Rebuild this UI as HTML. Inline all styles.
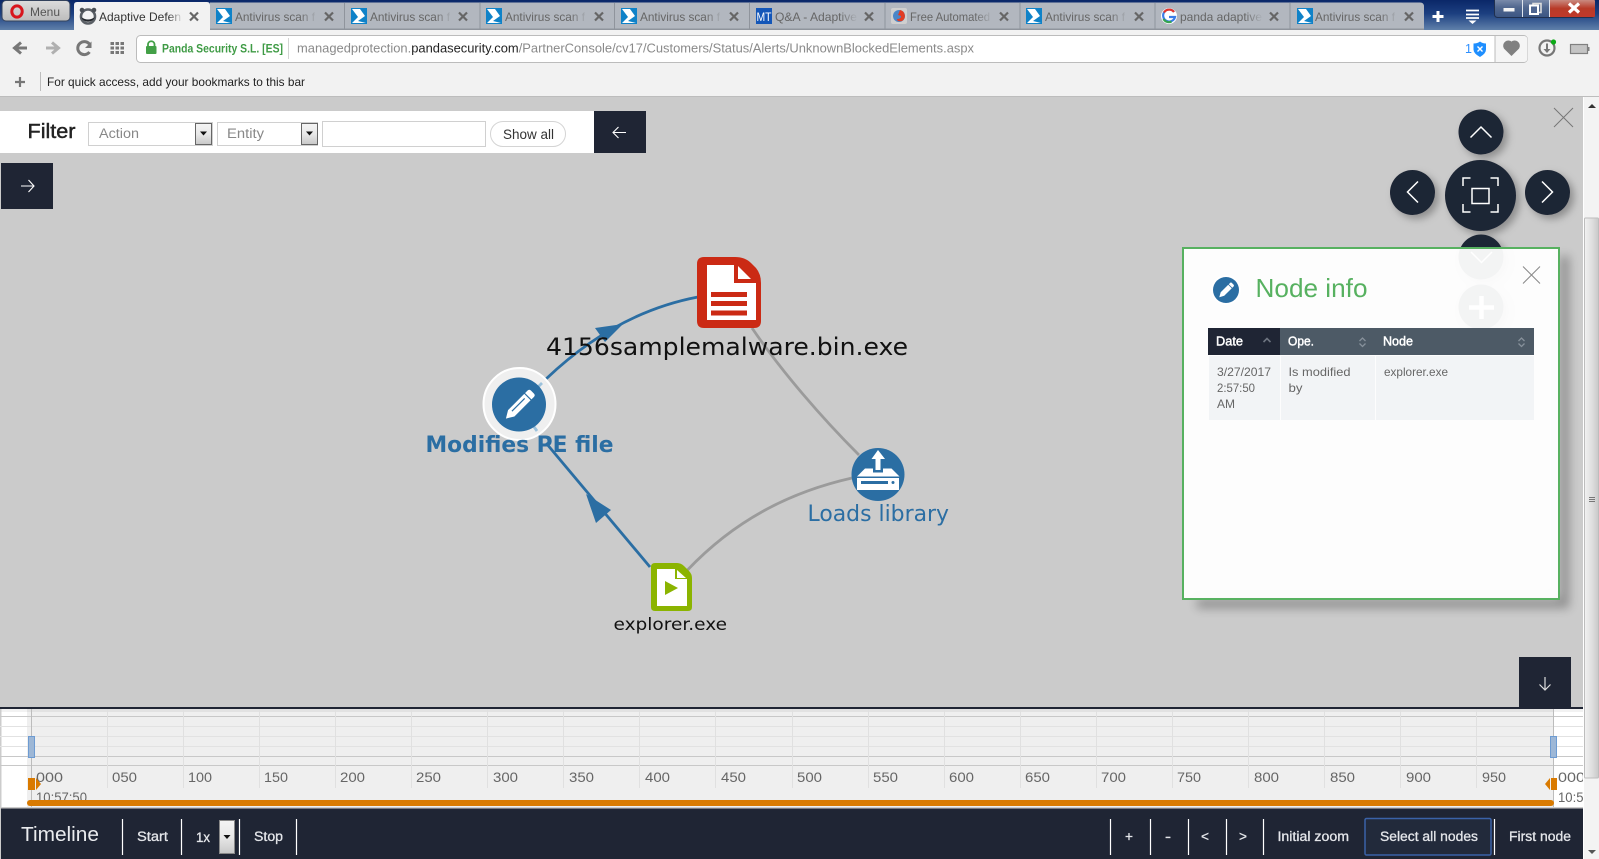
<!DOCTYPE html>
<html><head><meta charset="utf-8"><title>Adaptive Defense</title>
<style>
html,body{margin:0;padding:0;width:1599px;height:859px;overflow:hidden;background:#cbcbcb}
svg{display:block}
text{font-family:"Liberation Sans",sans-serif}
.g text,text.g{font-family:"DejaVu Sans",sans-serif}
.tab{font-size:12px;fill:#666}
.x{stroke:#666;stroke-width:2.2;fill:none}
.tl{font-size:14px;fill:#666}
.b{font-size:13.5px;fill:#e4e6ea;stroke:#e4e6ea;stroke-width:.3}
.sep{stroke:#fff;stroke-width:1.2}
.td{font-size:12px;fill:#666}
.th{font-size:12.5px;fill:#fff;stroke:#fff;stroke-width:.45}
</style></head><body>
<svg width="1599" height="859" viewBox="0 0 1599 859" xmlns="http://www.w3.org/2000/svg">
<defs>
<linearGradient id="top" x1="0" y1="0" x2="0" y2="1"><stop offset="0" stop-color="#0a2768"/><stop offset=".45" stop-color="#1c3f80"/><stop offset="1" stop-color="#5f80aa"/></linearGradient>
<linearGradient id="menu" x1="0" y1="0" x2="0" y2="1"><stop offset="0" stop-color="#dcdcdc"/><stop offset="1" stop-color="#bcbcbc"/></linearGradient>
<linearGradient id="sel" x1="0" y1="0" x2="0" y2="1"><stop offset="0" stop-color="#f5f5f5"/><stop offset=".5" stop-color="#e8e8e8"/><stop offset="1" stop-color="#c8c8c8"/></linearGradient>
<linearGradient id="win" x1="0" y1="0" x2="0" y2="1"><stop offset="0" stop-color="#8a99b5"/><stop offset=".5" stop-color="#52688f"/><stop offset="1" stop-color="#3b5583"/></linearGradient>
<linearGradient id="red" x1="0" y1="0" x2="0" y2="1"><stop offset="0" stop-color="#c98a80"/><stop offset=".5" stop-color="#b83a28"/><stop offset="1" stop-color="#c0392b"/></linearGradient>
<linearGradient id="thumb" x1="0" y1="0" x2="1" y2="0"><stop offset="0" stop-color="#f2f2f2"/><stop offset=".6" stop-color="#dcdcdc"/><stop offset="1" stop-color="#c8c8c8"/></linearGradient>
<linearGradient id="fade" x1="0" y1="0" x2="1" y2="0"><stop offset="0" stop-color="#b2b7bf" stop-opacity="0"/><stop offset="1" stop-color="#b2b7bf"/></linearGradient>
<linearGradient id="fadeA" x1="0" y1="0" x2="1" y2="0"><stop offset="0" stop-color="#f2f2f2" stop-opacity="0"/><stop offset="1" stop-color="#f2f2f2"/></linearGradient>
<filter id="sh" x="-40%" y="-40%" width="190%" height="190%"><feDropShadow dx="4" dy="4" stdDeviation="4" flood-color="#000" flood-opacity=".3"/></filter>
<clipPath id="tlclip"><rect x="0" y="709" width="1583" height="99"/></clipPath>
</defs>

<!-- page background -->
<rect width="1599" height="859" fill="#cbcbcb"/>

<!-- title bar -->
<rect width="1599" height="30" fill="url(#top)"/>
<rect x="2" y="0.500" width="68" height="20.500" rx="4" fill="url(#menu)" stroke="#33425c"/>
<ellipse cx="17" cy="11.500" rx="5.200" ry="5.600" fill="none" stroke="#d8151c" stroke-width="3"/>
<text x="30" y="16" font-size="12" fill="#555" textLength="30" lengthAdjust="spacingAndGlyphs">Menu</text>

<!-- tabs -->
<path d="M74 30V5q0-3 3-3H207q3 0 3 3V30Z" fill="#f2f2f2"/>
<path d="M210 30V2.500H1420q4 0 4 4V30Z" fill="#b2b7bf"/>
<path d="M344.500 3V29M480 3V29M614.500 3V29M749.500 3V29M885 3V29M1020 3V29M1155 3V29M1290 3V29" stroke="#8f949c" stroke-width="1"/>
<rect x="210" y="28.500" width="1214" height="1.500" fill="#8f949c"/>

<!-- active tab -->
<circle cx="88" cy="16.500" r="7" fill="#f4f4f4" stroke="#5a5f65" stroke-width="2.600"/>
<circle cx="82" cy="10" r="2.300" fill="#4a4f55"/><circle cx="94" cy="10" r="2.300" fill="#4a4f55"/>
<path d="M81 17a7.500 7.500 0 0 0 14 0q-7 5-14 0z" fill="#23272c"/>
<text x="99" y="21" font-size="12" fill="#333" textLength="82" lengthAdjust="spacingAndGlyphs">Adaptive Defen</text>
<rect x="168" y="6" width="15" height="18" fill="url(#fadeA)"/>
<path class="x" d="M190 12.500l8 8M198 12.500l-8 8"/>

<!-- antivirus tabs -->
<g id="avicon"><rect x="216" y="8" width="16" height="16" fill="#0f82c8"/><path d="M217 9h8l5 7-7 5 8 2h-14l6-6z" fill="#fff"/></g>
<text class="tab" x="235" y="21" textLength="80" lengthAdjust="spacingAndGlyphs">Antivirus scan f</text><rect x="300" y="6" width="18" height="18" fill="url(#fade)"/><path class="x" d="M325 12.500l8 8M333 12.500l-8 8"/>

<rect x="351" y="8" width="16" height="16" fill="#0f82c8"/><path d="M352 9h8l5 7-7 5 8 2h-14l6-6z" fill="#fff"/>
<text class="tab" x="370" y="21" textLength="80" lengthAdjust="spacingAndGlyphs">Antivirus scan f</text><rect x="435" y="6" width="18" height="18" fill="url(#fade)"/><path class="x" d="M459 12.500l8 8M467 12.500l-8 8"/>

<rect x="486" y="8" width="16" height="16" fill="#0f82c8"/><path d="M487 9h8l5 7-7 5 8 2h-14l6-6z" fill="#fff"/>
<text class="tab" x="505" y="21" textLength="80" lengthAdjust="spacingAndGlyphs">Antivirus scan f</text><rect x="570" y="6" width="18" height="18" fill="url(#fade)"/><path class="x" d="M595 12.500l8 8M603 12.500l-8 8"/>

<rect x="621" y="8" width="16" height="16" fill="#0f82c8"/><path d="M622 9h8l5 7-7 5 8 2h-14l6-6z" fill="#fff"/>
<text class="tab" x="640" y="21" textLength="80" lengthAdjust="spacingAndGlyphs">Antivirus scan f</text><rect x="705" y="6" width="18" height="18" fill="url(#fade)"/><path class="x" d="M730 12.500l8 8M738 12.500l-8 8"/>

<rect x="756" y="8" width="16" height="16" fill="#1356b8"/><text x="756.500" y="21" font-size="12" fill="#fff" textLength="15" lengthAdjust="spacingAndGlyphs">MT</text>
<text class="tab" x="775" y="21" textLength="82" lengthAdjust="spacingAndGlyphs">Q&amp;A - Adaptive</text><rect x="840" y="6" width="18" height="18" fill="url(#fade)"/><path class="x" d="M865 12.500l8 8M873 12.500l-8 8"/>

<rect x="891" y="8" width="16" height="16" rx="2" fill="#cfcfcf"/><circle cx="899" cy="16" r="6" fill="#4a86c8"/><path d="M900 10a6 6 0 0 1 2 11q-5 1-5-2 4 0 4-3l-3-1z" fill="#e23b22"/>
<text class="tab" x="910" y="21" textLength="80" lengthAdjust="spacingAndGlyphs">Free Automated</text><rect x="975" y="6" width="18" height="18" fill="url(#fade)"/><path class="x" d="M1000 12.500l8 8M1008 12.500l-8 8"/>

<rect x="1026" y="8" width="16" height="16" fill="#0f82c8"/><path d="M1027 9h8l5 7-7 5 8 2h-14l6-6z" fill="#fff"/>
<text class="tab" x="1045" y="21" textLength="80" lengthAdjust="spacingAndGlyphs">Antivirus scan f</text><rect x="1110" y="6" width="18" height="18" fill="url(#fade)"/><path class="x" d="M1135 12.500l8 8M1143 12.500l-8 8"/>

<circle cx="1169" cy="16" r="8" fill="#fff"/><path d="M1174 12a6 6 0 1 0 1 5h-6" fill="none" stroke="#3a7de8" stroke-width="2.200"/><path d="M1164 12.500a6 6 0 0 1 10-.5" fill="none" stroke="#e5352a" stroke-width="2.200"/><path d="M1163.500 19a6 6 0 0 0 8 2.500" fill="none" stroke="#35a24f" stroke-width="2.200"/>
<text class="tab" x="1180" y="21" textLength="82" lengthAdjust="spacingAndGlyphs">panda adaptive</text><rect x="1245" y="6" width="18" height="18" fill="url(#fade)"/><path class="x" d="M1270 12.500l8 8M1278 12.500l-8 8"/>

<rect x="1297" y="8" width="16" height="16" fill="#0f82c8"/><path d="M1298 9h8l5 7-7 5 8 2h-14l6-6z" fill="#fff"/>
<text class="tab" x="1315" y="21" textLength="80" lengthAdjust="spacingAndGlyphs">Antivirus scan f</text><rect x="1380" y="6" width="18" height="18" fill="url(#fade)"/><path class="x" d="M1405 12.500l8 8M1413 12.500l-8 8"/>

<!-- new tab, list -->
<path d="M1438 11v11M1432.500 16.500h11" stroke="#fff" stroke-width="3"/>
<path d="M1466 10.500h13M1466 14.500h13M1466 18h13" stroke="#fff" stroke-width="1.800"/><path d="M1468.500 20.500h8l-4 3.500z" fill="#fff"/>

<!-- window controls -->
<rect x="1494.500" y="-3" width="100" height="20.500" rx="3" fill="url(#win)" stroke="#20304f"/>
<path d="M1550 0h44q1 0 1 1V16q0 1-1 1h-44z" fill="url(#red)"/>
<path d="M1522.500 0V17M1549.500 0V17" stroke="#dfe5ee" stroke-width="1"/>
<rect x="1503.500" y="8" width="11" height="3.500" fill="#f4f4f4"/>
<rect x="1533" y="3.500" width="8" height="9" fill="none" stroke="#ddd" stroke-width="1.600"/>
<rect x="1530" y="5.500" width="8" height="8.500" fill="#4e6590" stroke="#fff" stroke-width="2"/>
<path d="M1569 3.500l10 9M1579 3.500l-10 9" stroke="#fff" stroke-width="3.200"/>

<!-- toolbar -->
<rect y="30" width="1599" height="66" fill="#f2f2f2"/>
<rect y="96" width="1599" height="1" fill="#bdbdbd"/>
<path d="M15 48h12" stroke="#777" stroke-width="3"/><path d="M21 42.500l-6.500 5.500 6.500 5.500" fill="none" stroke="#777" stroke-width="3"/>
<path d="M46 48h12" stroke="#b0b0b0" stroke-width="3"/><path d="M52 42.500l6.500 5.500-6.500 5.500" fill="none" stroke="#b0b0b0" stroke-width="3"/>
<path d="M89.500 52a6.500 6.500 0 1 1 .5-7" fill="none" stroke="#777" stroke-width="3"/><path d="M91.500 41.500v6.500h-6.500z" fill="#777"/>
<path d="M110.500 43.500h14M110.500 48h14M110.500 52.500h14" stroke="#777" stroke-width="3" stroke-dasharray="3.500 1.500"/>

<!-- address bar -->
<rect x="136.500" y="35.500" width="1391" height="27" rx="4" fill="#fff" stroke="#bcbcbc"/>
<path d="M1495 35.500V62.500" stroke="#bcbcbc"/>
<path d="M1495.500 36h28q4 0 4 4v18q0 4-4 4h-28z" fill="#f5f5f5"/>
<rect x="146" y="46" width="10.500" height="8" rx="1" fill="#43a047"/>
<path d="M148 46.500v-2.500a3.300 3.300 0 0 1 6.500 0v2.500" fill="none" stroke="#43a047" stroke-width="1.800"/>
<text x="162" y="52.500" font-size="11.500" font-weight="bold" fill="#3f9b45" textLength="121" lengthAdjust="spacingAndGlyphs">Panda Security S.L. [ES]</text>
<path d="M288.500 38V59" stroke="#d4d4d4"/>
<text x="297" y="52.500" font-size="12.500" fill="#8a8a8a" textLength="677" lengthAdjust="spacingAndGlyphs">managedprotection.<tspan fill="#222">pandasecurity.com</tspan>/PartnerConsole/cv17/Customers/Status/Alerts/UnknownBlockedElements.aspx</text>
<text x="1465" y="53" font-size="12.500" fill="#2e90ff">1</text>
<path d="M1473.500 43.500q4 0 6.500-2 2.500 2 6 2v6q0 4-6 7.500-6.500-3.500-6.500-7.500z" fill="#1f8fff"/>
<path d="M1477.500 46.500l5 5M1482.500 46.500l-5 5" stroke="#fff" stroke-width="1.400"/>
<path d="M1511.500 55l-7-7a4.500 4.500 0 0 1 7-5.500 4.500 4.500 0 0 1 7 5.500z" fill="#808080" stroke="#808080" stroke-width="1.500"/>
<circle cx="1547" cy="48" r="7.500" fill="none" stroke="#777" stroke-width="2.200"/>
<path d="M1547 43.500v7" stroke="#777" stroke-width="2"/><path d="M1543.500 49l3.500 4 3.500-4z" fill="#777"/>
<circle cx="1553.500" cy="42" r="2.600" fill="#0dab17"/>
<rect x="1570.500" y="44.500" width="17" height="9" fill="#c4c4c4" stroke="#808080" stroke-width="1.200"/><rect x="1588" y="47" width="1.500" height="4" fill="#808080"/>

<!-- bookmarks bar -->
<path d="M20 77v10M15 82h10" stroke="#777" stroke-width="2.200"/>
<path d="M40.500 72V91" stroke="#bdbdbd"/>
<text x="47" y="86" font-size="12" fill="#222" textLength="258" lengthAdjust="spacingAndGlyphs">For quick access, add your bookmarks to this bar</text>

<!-- scrollbar -->
<rect x="1583" y="97" width="16" height="762" fill="#f3f3f3"/>
<rect x="1583" y="97" width="1" height="762" fill="#fff"/>
<rect x="1584.500" y="218" width="14" height="560" rx="1" fill="url(#thumb)" stroke="#bdbdbd"/>
<path d="M1588 108h8l-4-4z" fill="#333"/><path d="M1588 850h8l-4 4z" fill="#555"/>
<path d="M1589 497.500h6M1589 499.500h6M1589 501.500h6" stroke="#777"/>

<!-- filter bar -->
<rect x="0" y="111" width="594" height="42" fill="#fff"/>
<rect x="594" y="111" width="52" height="42" fill="#1f2534"/>
<path d="M613 132.500h13M618.500 127l-5.500 5.500 5.500 5.500" fill="none" stroke="#fff" stroke-width="1.100"/>
<text x="27.500" y="138" font-size="20" fill="#222" stroke="#222" stroke-width=".45" textLength="48" lengthAdjust="spacingAndGlyphs">Filter</text>
<rect x="88.500" y="122.500" width="124" height="23" fill="#fff" stroke="#d0d0d0"/>
<text x="99" y="138" font-size="13.500" fill="#888" textLength="40" lengthAdjust="spacingAndGlyphs">Action</text>
<rect x="195.500" y="123.500" width="16" height="21" fill="url(#sel)" stroke="#666"/><path d="M200 131.500h7l-3.500 4z" fill="#111"/>
<rect x="217.500" y="122.500" width="100" height="23" fill="#fff" stroke="#d0d0d0"/>
<text x="227" y="138" font-size="13.500" fill="#888" textLength="37" lengthAdjust="spacingAndGlyphs">Entity</text>
<rect x="301.500" y="123.500" width="16" height="21" fill="url(#sel)" stroke="#666"/><path d="M306 131.500h7l-3.500 4z" fill="#111"/>
<rect x="322.500" y="121.500" width="163" height="25" fill="#fff" stroke="#d0d0d0"/>
<rect x="490.500" y="121.500" width="75" height="25" rx="12.500" fill="#fff" stroke="#d4d4d4"/>
<text x="503" y="139" font-size="13.500" fill="#333" textLength="51" lengthAdjust="spacingAndGlyphs">Show all</text>
<rect x="1" y="163" width="52" height="46" fill="#1f2534"/>
<path d="M21 186h13M28.500 180l5.500 6-5.500 6" fill="none" stroke="#fff" stroke-width="1.100"/>

<!-- big close -->
<path d="M1554 108l19 19M1573 108l-19 19" stroke="#777" stroke-width="1" fill="none"/>

<!-- nav circles -->
<g filter="url(#sh)" fill="#1f2534">
<circle cx="1481" cy="132" r="22.500"/>
<circle cx="1412.500" cy="192.500" r="22.500"/>
<circle cx="1547.500" cy="192.500" r="22.500"/>
<circle cx="1480.500" cy="195.500" r="35.500"/>
<circle cx="1481" cy="257" r="22.500"/>
<circle cx="1481" cy="307" r="22.500"/>
</g>
<path d="M1470.500 137.500l10.500-10.500 10.500 10.500" fill="none" stroke="#fff" stroke-width="1.500"/>
<path d="M1418 181.500l-10.500 10.500 10.500 10.500" fill="none" stroke="#fff" stroke-width="1.500"/>
<path d="M1542 181.500l10.500 10.500-10.500 10.500" fill="none" stroke="#fff" stroke-width="1.500"/>
<path d="M1463 186v-8h7.500M1490.500 178h7.500v8M1463 204v8h7.500M1490.500 212h7.500v-8" fill="none" stroke="#fff" stroke-width="1.500"/>
<rect x="1472" y="188.500" width="17" height="15" fill="none" stroke="#fff" stroke-width="1.500"/>

<!-- graph edges -->
<path d="M650 567L546 443" stroke="#2b6ea3" stroke-width="2.800" fill="none"/>
<path d="M546 379C590 337 640 308 698 297" stroke="#2b6ea3" stroke-width="2.800" fill="none"/>
<path d="M752 328C782 372 822 418 859 455" stroke="#9b9b9b" stroke-width="2.800" fill="none"/>
<path d="M852 478C790 492 735 520 687.500 570" stroke="#9b9b9b" stroke-width="2.800" fill="none"/>
<path d="M586 494L611 510 596 523Z" fill="#2b6ea3"/>
<path d="M623 324L595 328 605 342Z" fill="#2b6ea3"/>

<!-- pencil node -->
<circle cx="519.500" cy="404" r="36" fill="#efefef" stroke="#fff" stroke-width="2"/>
<path d="M537 388l5-5M532 424l5 7" stroke="#9cc2dc" stroke-width="2.800"/>
<circle cx="519" cy="404.500" r="27" fill="#2b6ea3"/>
<g transform="translate(519 405.500) rotate(45)">
<path d="M-4.500 -16.500q0-2.500 2.500-2.500h4q2.500 0 2.500 2.500V11L0 18.500-4.500 11Z" fill="#fff"/>
<path d="M-5 -12.500H5" stroke="#2b6ea3" stroke-width="1.200"/>
<path d="M-1 -9V9" stroke="#2b6ea3" stroke-width="1.200"/>
</g>
<text class="g" x="425.500" y="452" font-size="22" font-weight="bold" fill="#2b6ea3" textLength="188" lengthAdjust="spacingAndGlyphs">Modifies PE file</text>

<!-- red doc -->
<path d="M704 257H735Q745 257 751 263L756 268Q761 274 761 283V321Q761 328 754 328H704Q697 328 697 321V264Q697 257 704 257Z" fill="#cb2a14"/>
<path d="M707 265H734V283H756V320H707Z" fill="#fff"/>
<path d="M738 266L751 279H738Z" fill="#fff"/>
<path d="M711 292h36v5h-36zM711 301h36v5h-36zM711 310.500h36v5h-36z" fill="#cb2a14"/>
<text class="g" x="546" y="355" font-size="24" fill="#111" textLength="362" lengthAdjust="spacingAndGlyphs">4156samplemalware.bin.exe</text>

<!-- loads library -->
<circle cx="878" cy="474.500" r="26.500" fill="#2b6ea3"/>
<path d="M878 450L885 459H880.500V470H875.500V459H871.500Z" fill="#fff"/>
<path d="M857 476.500L865 468.500H873V472.500H883V468.500H891.500L899.500 476.500Z" fill="#fff"/>
<rect x="857" y="478" width="42" height="12" fill="#fff"/>
<rect x="861" y="481" width="27" height="3" fill="#2b6ea3"/><circle cx="893" cy="482.500" r="1.500" fill="#2b6ea3"/>
<text class="g" x="807.500" y="521" font-size="22" fill="#2b6ea3" textLength="141.500" lengthAdjust="spacingAndGlyphs">Loads library</text>

<!-- explorer -->
<path d="M655 563H677Q681 563 684 566L689 571Q692 574 692 578V607Q692 611 688 611H655Q651 611 651 607V567Q651 563 655 563Z" fill="#8bb400"/>
<path d="M657 569H675V579H687V606H657Z" fill="#fff"/>
<path d="M677 570L686 578H677Z" fill="#fff"/>
<path d="M665 581L678 588 665 595Z" fill="#8bb400"/>
<text class="g" x="613.500" y="630" font-size="17" fill="#111" textLength="113.500" lengthAdjust="spacingAndGlyphs">explorer.exe</text>

<!-- down button -->
<rect x="1519" y="657" width="52" height="50" fill="#1f2534"/>
<path d="M1545 677v13M1539.500 684.500l5.500 5.500 5.500-5.500" fill="none" stroke="#ddd" stroke-width="1.200"/>

<!-- timeline -->
<rect x="0" y="709" width="1583" height="99" fill="#fff"/>
<rect x="27" y="709" width="1526" height="99" fill="#efefef"/>
<rect x="0" y="709" width="1583" height="3" fill="#000" opacity=".05"/>
<rect x="0" y="707" width="1583" height="2" fill="#1f2534"/>
<rect x="0" y="709" width="1.500" height="99" fill="#ccc"/>
<path d="M0 726.500H1583M0 736.500H1583M0 746.500H1583" stroke="#e2e2e2"/>
<path d="M0 716.500H1583M0 756.500H1583M0 765.500H1583" stroke="#c8c8c8"/>
<path d="M107.500 709V788M183.500 709V788M259.500 709V788M335.500 709V788M411.500 709V788M487.500 709V788M563.500 709V788M639.500 709V788M715.500 709V788M792.500 709V788M868.500 709V788M944.500 709V788M1020.500 709V788M1096.500 709V788M1172.500 709V788M1248.500 709V788M1324.500 709V788M1400.500 709V788M1476.500 709V788" stroke="#e0e0e0"/>
<path d="M31.500 709V808M1553.500 709V808" stroke="#bcbcbc"/>
<rect x="28.500" y="736.500" width="6" height="21" fill="#9db7d6" stroke="#6d9bd2"/>
<rect x="1550.500" y="736.500" width="6" height="21" fill="#9db7d6" stroke="#6d9bd2"/>
<g clip-path="url(#tlclip)">
<text class="tl" x="36" y="782" textLength="27" lengthAdjust="spacingAndGlyphs">000</text>
<text class="tl" x="112" y="782" textLength="25" lengthAdjust="spacingAndGlyphs">050</text>
<text class="tl" x="188" y="782" textLength="24" lengthAdjust="spacingAndGlyphs">100</text>
<text class="tl" x="264" y="782" textLength="24" lengthAdjust="spacingAndGlyphs">150</text>
<text class="tl" x="340" y="782" textLength="25" lengthAdjust="spacingAndGlyphs">200</text>
<text class="tl" x="416" y="782" textLength="25" lengthAdjust="spacingAndGlyphs">250</text>
<text class="tl" x="493" y="782" textLength="25" lengthAdjust="spacingAndGlyphs">300</text>
<text class="tl" x="569" y="782" textLength="25" lengthAdjust="spacingAndGlyphs">350</text>
<text class="tl" x="645" y="782" textLength="25" lengthAdjust="spacingAndGlyphs">400</text>
<text class="tl" x="721" y="782" textLength="25" lengthAdjust="spacingAndGlyphs">450</text>
<text class="tl" x="797" y="782" textLength="25" lengthAdjust="spacingAndGlyphs">500</text>
<text class="tl" x="873" y="782" textLength="25" lengthAdjust="spacingAndGlyphs">550</text>
<text class="tl" x="949" y="782" textLength="25" lengthAdjust="spacingAndGlyphs">600</text>
<text class="tl" x="1025" y="782" textLength="25" lengthAdjust="spacingAndGlyphs">650</text>
<text class="tl" x="1101" y="782" textLength="25" lengthAdjust="spacingAndGlyphs">700</text>
<text class="tl" x="1177" y="782" textLength="24" lengthAdjust="spacingAndGlyphs">750</text>
<text class="tl" x="1254" y="782" textLength="25" lengthAdjust="spacingAndGlyphs">800</text>
<text class="tl" x="1330" y="782" textLength="25" lengthAdjust="spacingAndGlyphs">850</text>
<text class="tl" x="1406" y="782" textLength="25" lengthAdjust="spacingAndGlyphs">900</text>
<text class="tl" x="1482" y="782" textLength="24" lengthAdjust="spacingAndGlyphs">950</text>
<text class="tl" x="1558" y="782" textLength="27" lengthAdjust="spacingAndGlyphs">000</text>
<text class="tl" x="36" y="802" textLength="51" lengthAdjust="spacingAndGlyphs">10:57:50</text>
<text class="tl" x="1558" y="802" textLength="51" lengthAdjust="spacingAndGlyphs">10:57:50</text>
</g>
<rect x="1583" y="709" width="1" height="99" fill="#fff"/>
<rect x="27" y="800" width="1527" height="6" rx="3" fill="#d97a00"/>
<rect x="28" y="778" width="7" height="12" fill="#d97a00"/><path d="M36 778l5 6-5 6z" fill="#d97a00"/>
<rect x="1551" y="778" width="6" height="12" fill="#d97a00"/><path d="M1550 778l-5 6 5 6z" fill="#d97a00"/>
<rect x="0" y="807" width="1583" height="1.500" fill="#ccc"/>

<!-- bottom bar -->
<rect x="1" y="808.500" width="1582" height="50.500" fill="#1f2534"/>
<text x="21" y="841" font-size="20" fill="#e9ebee" textLength="78" lengthAdjust="spacingAndGlyphs">Timeline</text>
<path class="sep" d="M122.500 819V855M181.500 819V855M239.500 819V855M296.500 819V855M1110.500 819V855M1150.500 819V855M1188.500 819V855M1226.500 819V855M1263.500 819V855M1494.500 819V855"/>
<text class="b" x="137" y="841" textLength="31" lengthAdjust="spacingAndGlyphs">Start</text>
<text class="b" x="196" y="842" textLength="14" lengthAdjust="spacingAndGlyphs">1x</text>
<rect x="219.500" y="820.500" width="15" height="33" fill="url(#sel)" stroke="#888"/><path d="M223.500 835h7l-3.500 4z" fill="#111"/>
<text class="b" x="254" y="841" textLength="29" lengthAdjust="spacingAndGlyphs">Stop</text>
<text class="b" x="1125" y="841" textLength="8" lengthAdjust="spacingAndGlyphs">+</text>
<text class="b" x="1165" y="841" textLength="6" lengthAdjust="spacingAndGlyphs">-</text>
<text class="b" x="1201" y="841" textLength="8" lengthAdjust="spacingAndGlyphs">&lt;</text>
<text class="b" x="1239" y="841" textLength="8" lengthAdjust="spacingAndGlyphs">&gt;</text>
<text class="b" x="1277.500" y="841" textLength="71.500" lengthAdjust="spacingAndGlyphs">Initial zoom</text>
<rect x="1365" y="818.500" width="126" height="36.500" rx="1.500" fill="#222a3b" stroke="#3a62a8" stroke-width="1.500"/>
<text class="b" x="1380" y="841" textLength="98" lengthAdjust="spacingAndGlyphs">Select all nodes</text>
<text class="b" x="1509" y="841" textLength="62" lengthAdjust="spacingAndGlyphs">First node</text>

<!-- node info panel -->
<path d="M1560 256h9v352h-372v-9h363z" fill="#000" opacity=".3" style="filter:blur(5px)"/>
<rect x="1183" y="248" width="376" height="351" fill="#fff" fill-opacity=".95" stroke="#57b160" stroke-width="2"/>
<path d="M1469 307.500h25M1481.500 296v23" stroke="#fff" stroke-width="4.500"/>
<path d="M1471 252l10.500 10.500 10.500-10.500" fill="none" stroke="#fff" stroke-width="1.500"/>
<circle cx="1226" cy="290" r="15" fill="#fff"/>
<circle cx="1226" cy="290" r="13" fill="#2b6ea3"/>
<g transform="translate(1226 290.500) rotate(45)"><path d="M-2.500 -8q0-1.500 1.500-1.500h2q1.500 0 1.500 1.500V5L0 9.500-2.500 5Z" fill="#fff"/><path d="M-3 -6H3" stroke="#2b6ea3" stroke-width=".8"/></g>
<text x="1255.500" y="297" font-size="26" fill="#57b160" textLength="112" lengthAdjust="spacingAndGlyphs">Node info</text>
<path d="M1523 266.500l17 17M1540 266.500l-17 17" stroke="#888" stroke-width="1" fill="none"/>

<rect x="1208" y="328" width="72" height="27" fill="#1f2534"/>
<rect x="1280" y="328" width="254" height="27" fill="#4d5a66"/>
<text class="th" x="1216" y="345.500" textLength="27" lengthAdjust="spacingAndGlyphs">Date</text>
<text class="th" x="1288" y="345.500" textLength="26" lengthAdjust="spacingAndGlyphs">Ope.</text>
<text class="th" x="1383" y="345.500" textLength="30" lengthAdjust="spacingAndGlyphs">Node</text>
<path d="M1263.500 342l3.500-3.500 3.500 3.500" fill="none" stroke="#6d7480" stroke-width="1.600"/>
<path d="M1359.500 341l3-3 3 3M1359.500 343.500l3 3 3-3" fill="none" stroke="#87919b" stroke-width="1.300"/>
<path d="M1518.500 341l3-3 3 3M1518.500 343.500l3 3 3-3" fill="none" stroke="#87919b" stroke-width="1.300"/>
<rect x="1209" y="356" width="71" height="64" fill="#f2f4f6"/>
<rect x="1281" y="356" width="94" height="64" fill="#f2f4f6"/>
<rect x="1376" y="356" width="158" height="64" fill="#f2f4f6"/>
<text class="td" x="1217" y="376" textLength="54" lengthAdjust="spacingAndGlyphs">3/27/2017</text>
<text class="td" x="1217" y="392" textLength="38" lengthAdjust="spacingAndGlyphs">2:57:50</text>
<text class="td" x="1217" y="408" textLength="18" lengthAdjust="spacingAndGlyphs">AM</text>
<text class="td" x="1288.500" y="376" textLength="62" lengthAdjust="spacingAndGlyphs">Is modified</text>
<text class="td" x="1288.500" y="392" textLength="14" lengthAdjust="spacingAndGlyphs">by</text>
<text class="td" x="1384" y="376" textLength="64" lengthAdjust="spacingAndGlyphs">explorer.exe</text>
</svg>
</body></html>
